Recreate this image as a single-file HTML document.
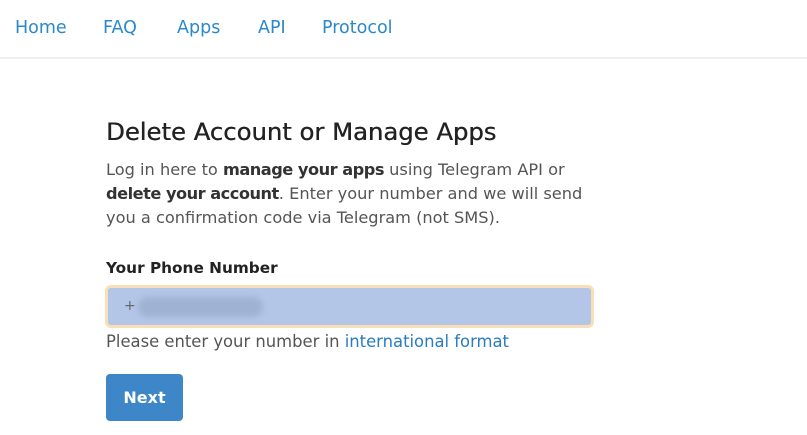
<!DOCTYPE html>
<html><head><style>
body{margin:0;width:807px;height:435px;background:#fff;font-family:"DejaVu Sans","Liberation Sans",sans-serif;color:#444;overflow:hidden;position:relative}
.nav{position:absolute;left:0;top:0;width:807px;height:57px;border-bottom:2px solid #eee}
.nav a{position:absolute;top:18px;font-size:17.5px;color:#2a88cc;text-decoration:none}
.h{position:absolute;left:106px;top:117px;font-size:24.3px;color:#222;font-weight:normal;margin:0;text-shadow:0.4px 0 0 #222}
.p{position:absolute;left:106px;top:158px;font-size:16.2px;line-height:24px;color:#555;width:560px}
.p b{color:#333;letter-spacing:-0.5px}
.lab{position:absolute;left:106px;top:259px;font-size:15.3px;font-weight:bold;color:#222}
.inp{position:absolute;left:105px;top:285px;width:483px;height:37px;background:#b3c6e8;border:3px solid #f8dfb8;border-radius:6px}
.blur{position:absolute;left:30px;top:9px;width:125px;height:20px;background:#9fb2d2;border-radius:10px;filter:blur(3px)}
.plus{position:absolute;left:16px;top:10px;font-size:14px;color:#666}
.hint{position:absolute;left:106px;top:332px;font-size:16.4px;color:#555}
.hint span{color:#2a7cc0}
.btn{position:absolute;left:106px;top:374px;width:77px;height:47px;background:#3d87c9;border-radius:4px;color:#fff;font-weight:bold;font-size:16px;text-align:center;line-height:47px}
</style></head><body>
<div class="nav"><a style="left:15px">Home</a><a style="left:103px">FAQ</a><a style="left:177px">Apps</a><a style="left:258px">API</a><a style="left:322px">Protocol</a></div>
<h1 class="h">Delete Account or Manage Apps</h1>
<div class="p">Log in here to <b>manage your apps</b> using Telegram API or<br><b>delete your account</b>. Enter your number and we will send<br>you a confirmation code via Telegram (not SMS).</div>
<div class="lab">Your Phone Number</div>
<div class="inp"><div class="plus">+</div><div class="blur"></div></div>
<div class="hint">Please enter your number in <span>international format</span></div>
<div class="btn">Next</div>
</body></html>
